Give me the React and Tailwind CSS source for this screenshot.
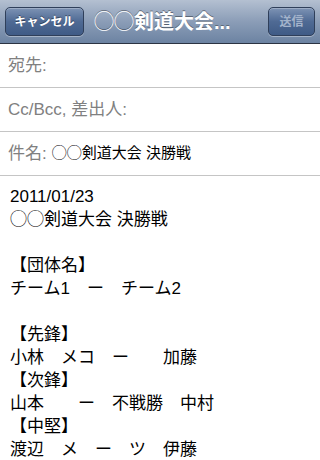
const font = {
  fontFamily: '"Liberation Sans", "Noto Sans CJK JP", sans-serif',
};

const bodyLines = [
  "2011/01/23",
  "◯◯剣道大会 決勝戦",
  "",
  "【団体名】",
  "チーム1　ー　チーム2",
  "",
  "【先鋒】",
  "小林　メコ　ー　　加藤",
  "【次鋒】",
  "山本　　ー　不戦勝　中村",
  "【中堅】",
  "渡辺　メ　ー　ツ　伊藤",
];

function NavButton({ children, dim, width }) {
  return (
    <div
      className={
        "flex h-[29px] items-center justify-center rounded-[5px] border border-[#2f3f5a] bg-gradient-to-b from-[#7d93b4] via-[#4f6a94] to-[#3f5b86] shadow-[inset_0_1px_0_rgba(255,255,255,0.25),0_1px_0_rgba(255,255,255,0.35)] " +
        width
      }
    >
      <span
        className={
          "text-[12px] font-bold leading-none " +
          (dim ? "text-[#a3b3cb]" : "text-white [text-shadow:0_-1px_0_rgba(0,0,0,0.45)]")
        }
      >
        {children}
      </span>
    </div>
  );
}

function Field({ label, value }) {
  return (
    <div className="flex h-[44px] items-center border-b border-[#c5c5c5] px-[8px] text-[17px]">
      <span className="text-[#808080]">{label}</span>
      {value && <span className="ml-[5px] text-[15px] text-black">{value}</span>}
    </div>
  );
}

export default function App() {
  return (
    <div className="h-[460px] w-[320px] overflow-hidden bg-white" style={font}>
      <div className="flex h-[44px] items-center border-b border-[#2b3442] bg-gradient-to-b from-[#b4c0d1] via-[#8b9db7] to-[#6c83a2] px-[5px]">
        <NavButton width="w-[79px]">キャンセル</NavButton>
        <div className="min-w-0 flex-1 truncate pl-[10px] text-[20px] font-bold text-white [text-shadow:0_-1px_0_rgba(0,0,0,0.4)]">
          ◯◯剣道大会...
        </div>
        <NavButton dim width="w-[47px]">
          送信
        </NavButton>
      </div>

      <Field label="宛先:" />
      <Field label="Cc/Bcc, 差出人:" />
      <Field label="件名:" value="◯◯剣道大会 決勝戦" />

      <div className="px-[10px] pt-[9px] text-[17px] leading-[23px] text-black">
        {bodyLines.map((line, i) => (
          <div key={i} className="h-[23px] whitespace-pre">
            {line}
          </div>
        ))}
      </div>
    </div>
  );
}
